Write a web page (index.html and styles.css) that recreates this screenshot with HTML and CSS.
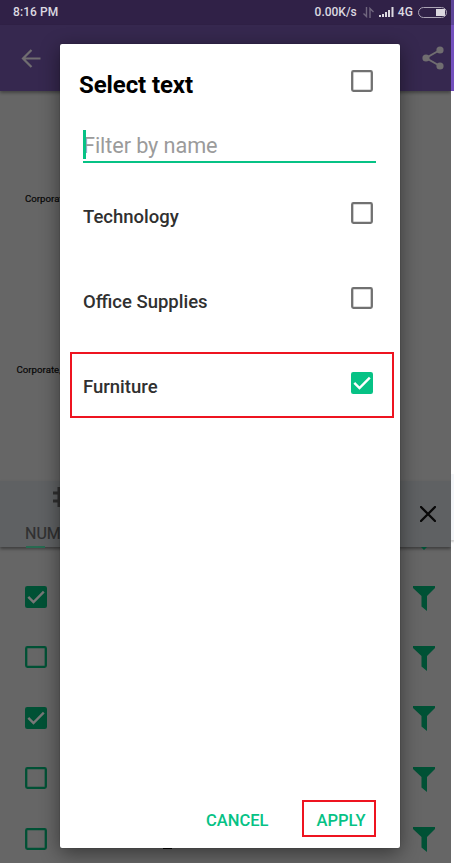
FILE: index.html
```html
<!DOCTYPE html>
<html lang="en">
<head>
<meta charset="utf-8">
<title>Select text</title>
<link rel="stylesheet" href="styles.css">
</head>
<body>
<svg class="defs" width="0" height="0">
  <symbol id="box" viewBox="0 0 22 22"><rect x="1.2" y="1.2" width="19.6" height="19.6" rx="1.2" fill="none" stroke="currentColor" stroke-width="2.3"/></symbol>
  <symbol id="checked" viewBox="0 0 22 22"><rect width="22" height="22" rx="2.2" fill="currentColor"/><path d="M3.300 10.800 8.500 16 18.800 5.700" fill="none" stroke="var(--tick)" stroke-width="2.4"/></symbol>
  <symbol id="funnel" viewBox="0 0 22 25"><path d="M0 0H22V2L14 10V25L8.5 20.5V10L0 2Z" fill="currentColor"/></symbol>
</svg>
<div class="screen">
  <header class="status">
    <span>8:16 PM</span>
    <span class="rate">0.00K/s</span>
    <svg class="arrows" width="11" height="11" viewBox="0 0 11 11"><path d="M3.5 0V9.5L.5 6.5M7 11V1.5L10.5 5" fill="none" stroke="currentColor" stroke-width="1.4"/></svg>
    <svg class="signal" width="15" height="10" viewBox="0 0 15 10"><path d="M0 8h2v2H0zM3 7h2v3H3zM6 5h2v5H6zM9 3h2v7H9zM12.500 0h2v10h-2z" fill="currentColor"/></svg>
    <span class="net">4G</span>
    <span class="battery"></span>
  </header>
  <nav class="toolbar">
    <svg width="20" height="19" viewBox="0 0 20 19"><path d="M10.500 1 2 9.500 10.500 18M2 9.500H19.500" fill="none" stroke="currentColor" stroke-width="2.2"/></svg>
    <svg width="22" height="24" viewBox="0 0 22 24"><path d="M18 4 4 12 18 20" fill="none" stroke="currentColor" stroke-width="2"/><g fill="currentColor"><circle cx="18" cy="4" r="3.600"/><circle cx="4" cy="12" r="3.600"/><circle cx="18" cy="20" r="3.600"/></g></svg>
  </nav>
  <section class="chart">
    <p class="label first">Corporate, Technology</p>
    <p class="label second">Corporate, Furniture</p>
  </section>
  <section class="tabs">
    <div class="tab">
      <svg width="20" height="22" viewBox="0 0 20 22"><path d="M0 7H20M0 15H20M6 1V21M14 1V21" fill="none" stroke="currentColor" stroke-width="3"/></svg>
      <span>NUMBER</span>
    </div>
    <svg class="close" width="16" height="16" viewBox="0 0 16 16"><path d="M1 1 15 15M15 1 1 15" stroke="currentColor" stroke-width="2.300" stroke-linecap="round"/></svg>
  </section>
  <section class="fields">
    <div class="peek"><i></i><b></b></div>
    <div class="field"><svg class="check"><use href="#checked"/></svg><svg class="funnel"><use href="#funnel"/></svg></div>
    <div class="field"><svg class="check"><use href="#box"/></svg><svg class="funnel"><use href="#funnel"/></svg></div>
    <div class="field"><svg class="check"><use href="#checked"/></svg><svg class="funnel"><use href="#funnel"/></svg></div>
    <div class="field"><svg class="check"><use href="#box"/></svg><svg class="funnel"><use href="#funnel"/></svg></div>
    <div class="field"><svg class="check"><use href="#box"/></svg><svg class="funnel"><use href="#funnel"/></svg></div>
  </section>
  <i class="mark"></i>
</div>
<div class="edge"><div class="edge-top"></div><div class="edge-bar"></div></div>
<main class="dialog">
  <div class="title"><h1>Select text</h1><svg class="check"><use href="#box"/></svg></div>
  <div class="filter"><span>Filter by name</span></div>
  <div class="option"><span>Technology</span><svg class="check"><use href="#box"/></svg></div>
  <div class="option"><span>Office Supplies</span><svg class="check"><use href="#box"/></svg></div>
  <div class="option selected"><span>Furniture</span><svg class="check on"><use href="#checked"/></svg></div>
  <footer><button>CANCEL</button><button class="apply">APPLY</button></footer>
</main>
</body>
</html>
```
FILE: styles.css
```css
* { box-sizing: border-box; }
body { margin: 0; width: 454px; height: 863px; display: flex; position: relative; overflow: hidden; background: #fff; font-family: Roboto, sans-serif; }
h1, p { margin: 0; }
svg { display: block; flex: none; }
.defs { position: absolute; }
.screen { width: 451px; height: 863px; background: #666; overflow: hidden; position: relative; }
.status { height: 25px; padding: 0 4px 1px 13px; display: flex; align-items: center; background: #302147; color: #dcd9e0; font-size: 12px; font-weight: 500; letter-spacing: .1px; }
.rate { margin-left: auto; letter-spacing: 0; }
.arrows { margin-left: 6px; color: #71677f; }
.signal { margin-left: 5px; }
.net { margin-left: 4px; }
.battery { width: 29px; height: 11px; margin-left: 5px; border: 1px solid #aaa3b4; border-radius: 6px; background: linear-gradient(90deg, transparent 17px, #dcd9e0 17px) 0 1px / 26px 7px no-repeat; }
.toolbar { height: 66px; padding: 0 7px 0 21px; display: flex; align-items: center; justify-content: space-between; background: #36284f; color: #706d70; box-shadow: 0 2px 3px #0005; position: relative; }
.chart { height: 390px; overflow: hidden; }
.label { font-size: 9.700px; line-height: 12px; color: #050505; -webkit-text-stroke: .15px #050505; white-space: nowrap; }
.first { margin: 102px 0 0 25px; }
.second { margin: 159px 0 0 16.500px; }
.tabs { height: 66px; display: flex; justify-content: space-between; background: #5f6163; box-shadow: 0 2px 3px #0006; position: relative; padding: 5px 15px 0 25px; }
.tab { color: #303030; display: flex; flex-direction: column; align-items: center; font-size: 16px; line-height: 18px; -webkit-text-stroke: .2px #303030; }
.tab svg { margin: 0 0 17px 12px; }
.close { margin-top: 20px; color: #080808; }
.fields { color: #005135; --tick: #777; }
.peek { display: flex; justify-content: space-between; height: 20px; padding: 0 24px 0 26px; position: relative; }
.peek i { width: 19px; height: 2px; background: #286a51; position: relative; top: -1px; }
.peek b { border: 3px solid transparent; border-top-color: #005135; height: 0; }
.field { height: 60.400px; padding: 19px 16.500px 0 24.700px; display: flex; justify-content: space-between; }
.check { width: 22px; height: 22px; }
.funnel { width: 22px; height: 25px; margin-top: -.500px; }
.mark { position: absolute; left: 163px; top: 848px; width: 9px; height: 1px; background: #050505; }
.edge { width: 3px; height: 863px; background: #fff; }
.edge-top { height: 91px; background: linear-gradient(#5d4598 25px, #7350be 25px); }
.edge-bar { height: 66px; margin-top: 383px; background: #f4f6f9; box-shadow: 0 2px 2px #0003; }
.dialog { position: absolute; left: 59.500px; top: 44px; width: 340px; height: 804px; display: flex; flex-direction: column; border-radius: 2px; background: #fff; box-shadow: 0 0 1px #0008, 0 5px 20px #0007; color: #303030; --tick: #fff; }
.dialog .check { color: #717171; }
.dialog .on { color: #06c285; }
.title { height: 81px; padding: 26px 27px 0 19.500px; display: flex; justify-content: space-between; }
.title h1 { color: #000; font-size: 24px; line-height: 30px; font-weight: 700; letter-spacing: -.1px; }
.filter { height: 38px; margin: 0 23.500px 0 23.500px; border-bottom: 2px solid #06c285; position: relative; font-size: 21.700px; line-height: 41px; letter-spacing: -.1px; color: #9b9b9b; }
.filter::before { content: ""; position: absolute; left: 0; top: 5px; width: 2.500px; height: 29px; background: #06c285; }
.option { height: 66px; margin: 19px 6px 0 10px; padding: 20px 21px 0 13.500px; display: flex; justify-content: space-between; font-size: 18.500px; line-height: 30px; font-weight: 500; }
.selected { border: 2px solid #ee1420; padding: 18px 19px 0 11.500px; }
footer { margin-top: auto; height: 48px; display: flex; justify-content: flex-end; padding-right: 24px; }
button { background: none; border: 0; padding: 3px 0 0; height: 37px; color: #06c285; font: 500 16.500px/35px Roboto, sans-serif; }
.apply { width: 74px; margin-left: 33px; border: 2px solid #ee1420; line-height: 31px; padding-left: 5px; }
```
